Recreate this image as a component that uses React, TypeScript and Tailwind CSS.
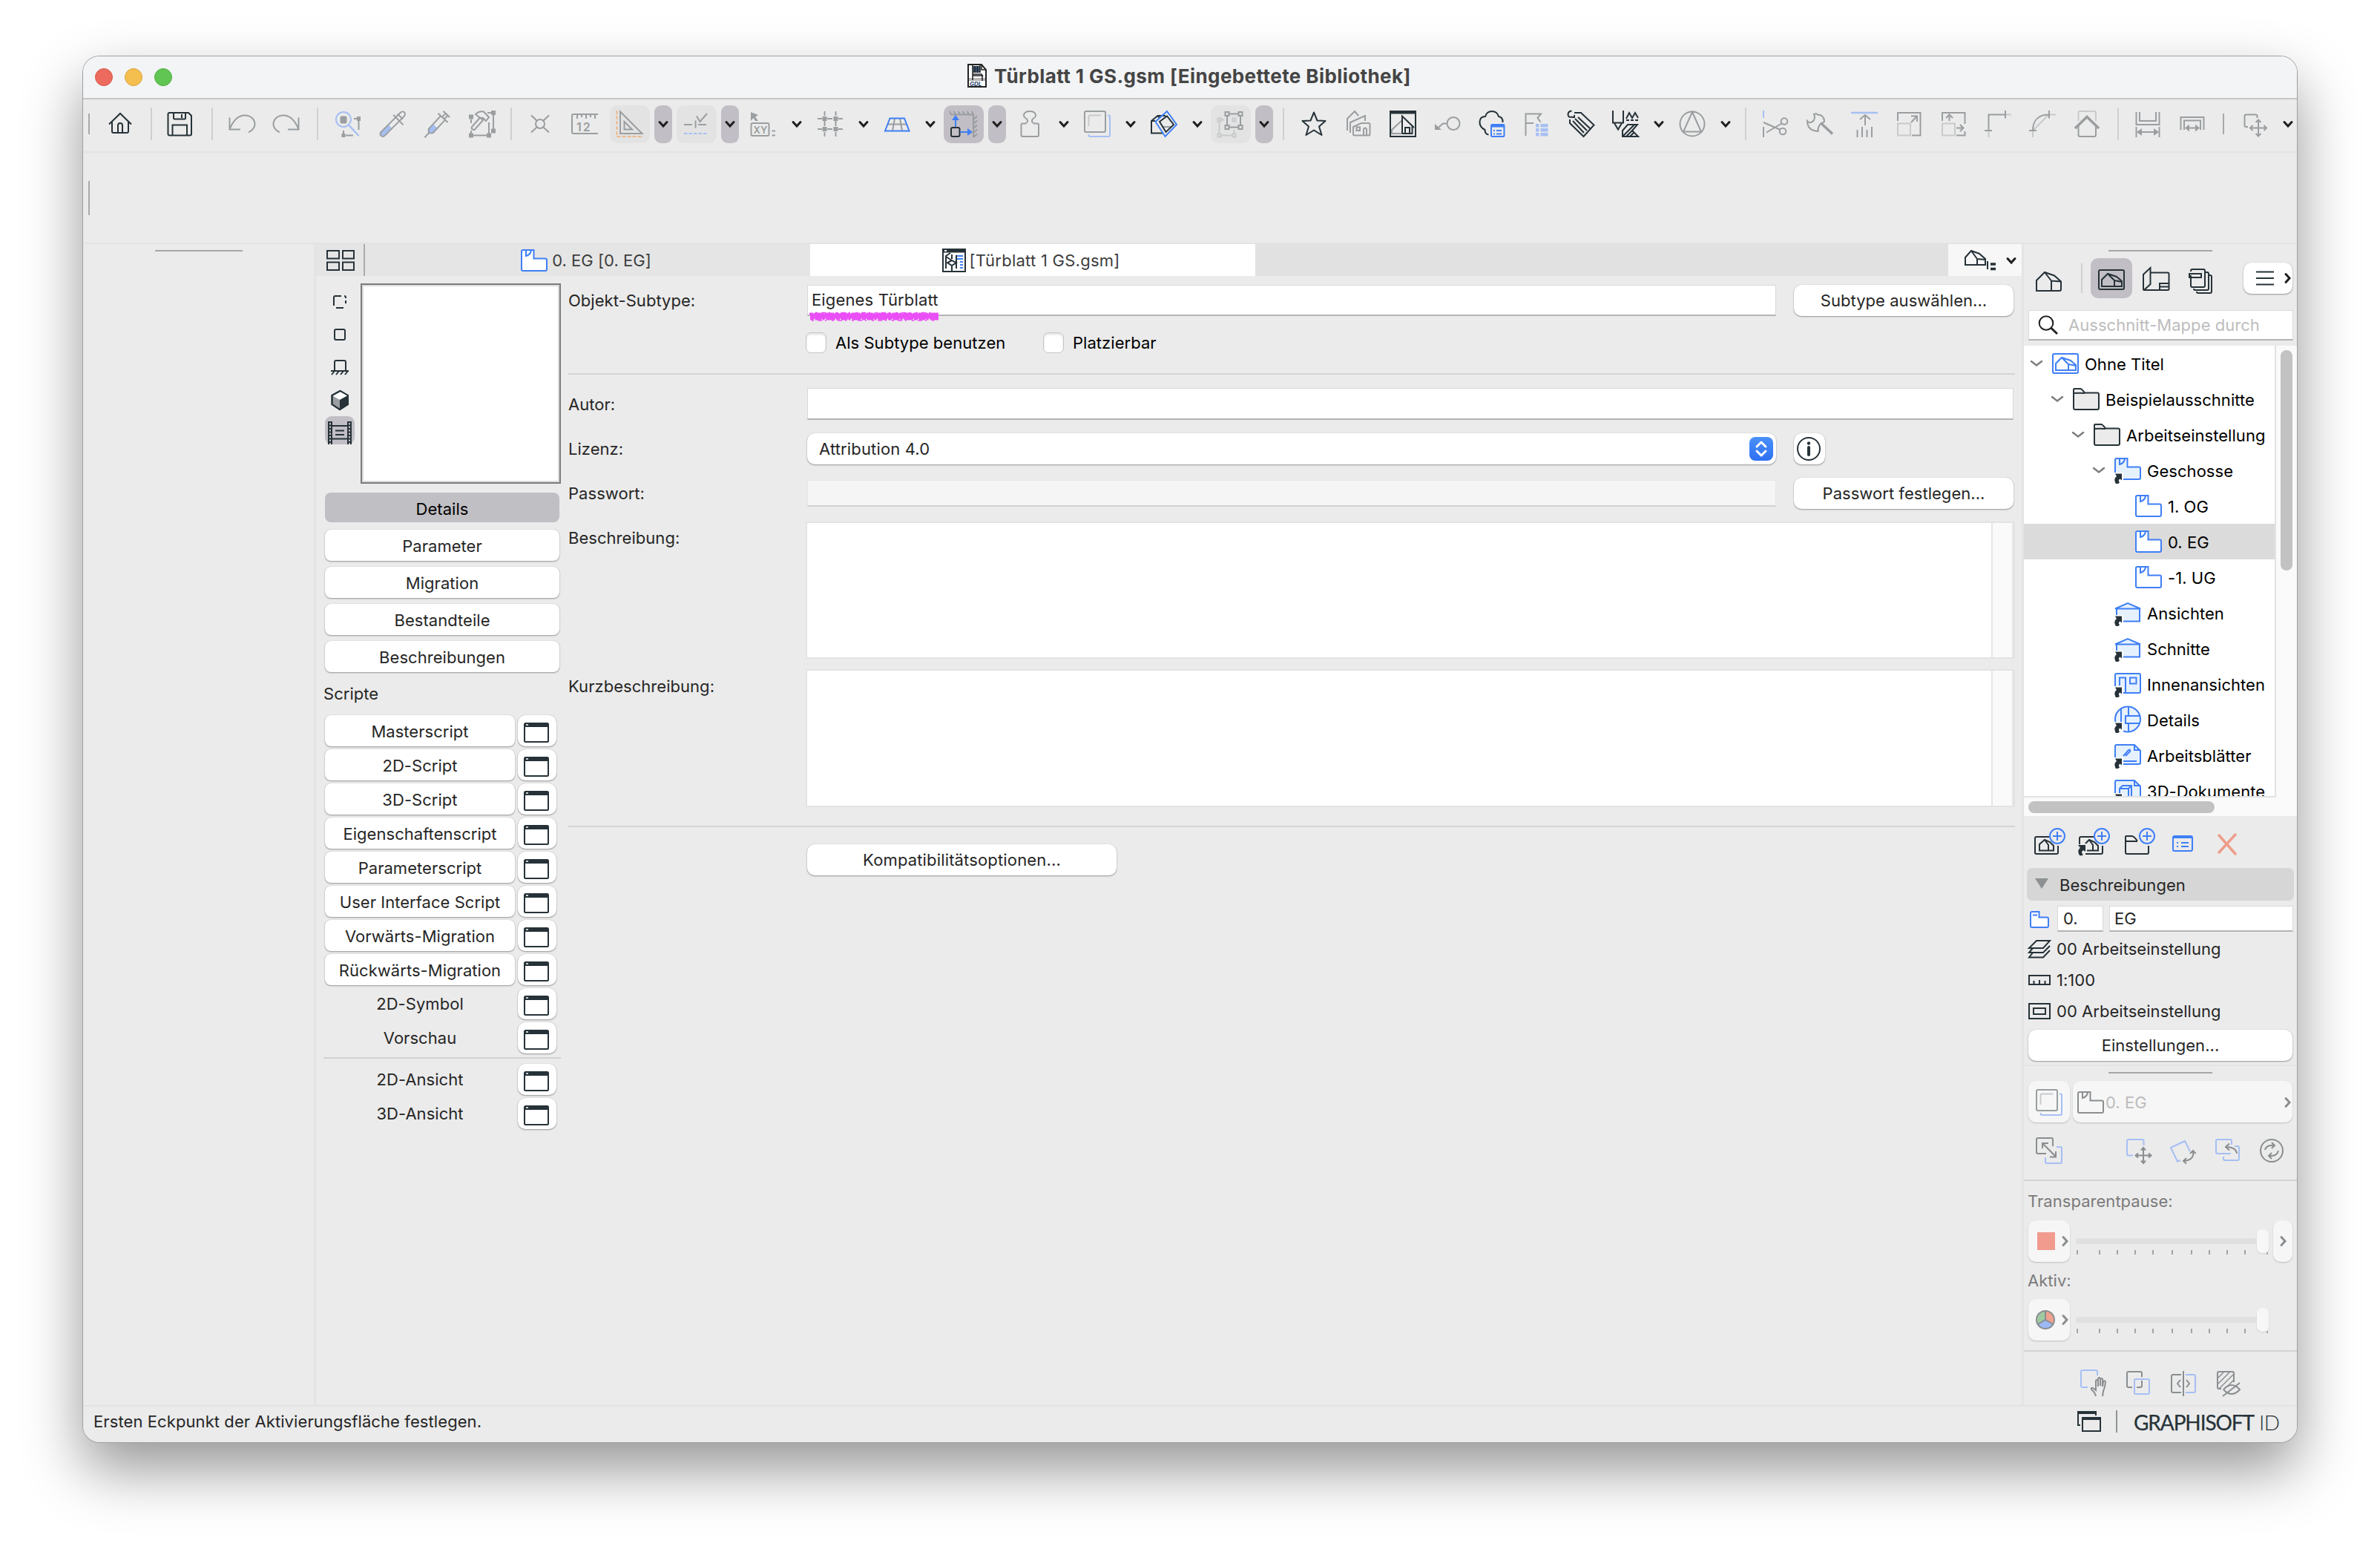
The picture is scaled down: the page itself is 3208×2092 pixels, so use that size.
import type { ReactNode } from "react";

const DARK = "#263238";
const GRAY = "#9a9ea0";
const MID = "#8a8e90";
const LIGHT = "#c8cacb";
const BLUE = "#3f7ff6";
const PALE = "#a6bff3";

type SvgProps = {
  w?: number;
  h?: number;
  c?: string;
  sw?: number;
  children: ReactNode;
};

function Svg({ w = 36, h = 36, c = GRAY, sw = 2, children }: SvgProps) {
  return (
    <svg
      width={w}
      height={h}
      viewBox={`0 0 ${w} ${h}`}
      fill="none"
      stroke={c}
      strokeWidth={sw}
      className="block shrink-0 overflow-visible"
    >
      {children}
    </svg>
  );
}

function Chevron({ c = "#1f1f1f", dir = "down" }: { c?: string; dir?: "down" | "right" }) {
  return (
    <Svg w={14} h={14} c={c} sw={3}>
      {dir === "down" ? (
        <path d="M2 4.500 7 10l5-5.500" strokeLinecap="round" />
      ) : (
        <path d="M5 1.500 10 7 5 12.500" strokeLinecap="round" />
      )}
    </Svg>
  );
}

/* ---------- toolbar icons ---------- */

const icons: Record<string, ReactNode> = {
  home: (
    <Svg c={DARK}>
      <path d="M3 18.500 18 4l15 14.500M7 15.500V28q0 2 2 2h18q2 0 2-2V15.500M15 29.500V20q0-3 3-3t3 3v9.500" />
    </Svg>
  ),
  save: (
    <Svg c={DARK}>
      <path d="M4.500 3H30l4 4v24.500q0 2-2 2H4.500q-2 0-2-2V5q0-2 2-2zM10 3v7q0 1.500 1.500 1.500h13q1.500 0 1.500-1.500V3M21 5v5M8.500 33.500V19.500H28v14" />
    </Svg>
  ),
  undo: (
    <Svg>
      <path d="M1.500 9.500V25.500H16M1.500 25.500C6 14 13 6.500 22 6.500 30 6.500 35.500 12 35.500 18.500c0 5-4 8.500-8.500 11" />
    </Svg>
  ),
  redo: (
    <Svg>
      <path d="M34.500 9.500V25.500H20M34.500 25.500C30 14 23 6.500 14 6.500 6 6.500.5 12 .5 18.500c0 5 4 8.500 8.500 11" />
    </Svg>
  ),
  findSelect: (
    <Svg>
      <circle cx="11" cy="12" r="10" stroke={PALE} />
      <path d="M18.500 20 31.500 34" stroke={PALE} strokeWidth="2.500" />
      <rect x="6.500" y="7.500" width="9" height="10" rx="2" fill={GRAY} stroke="none" />
      <path d="M25 11h4M31.500 13v13M11 27v5M14 33.500h10" />
      <rect x="29" y="8" width="5" height="6" fill={GRAY} stroke="none" />
      <rect x="8.500" y="31" width="5" height="5" fill={GRAY} stroke="none" />
    </Svg>
  ),
  dropper: (
    <Svg>
      <g transform="translate(17.500 18) rotate(45)">
        <path d="M-3.500 5h7v14a3.500 3.500 0 0 1-7 0z" fill={PALE} stroke="none" />
        <path d="M-3.500-9v28a3.500 3.500 0 0 0 7 0V-9M-8-9H11M-3.500-9v-9a3.500 4 0 0 1 7 0v9M-5-14H5" />
      </g>
    </Svg>
  ),
  syringe: (
    <Svg>
      <g transform="translate(17.500 18) rotate(43)">
        <path d="M-4 4h8v9l-4 4-4-4z" fill={PALE} stroke="none" />
        <path d="M-4-11v24l4 4 4-4v-24M-9-11H9M0 17v8M-1.500-11v-7M2.500-11v-7M-6-18H6" />
      </g>
    </Svg>
  ),
  hammerNodes: (
    <Svg>
      <path d="M3 12v5M3 27v5M6 33.500h18M27 31V16M33 5v20M25 3h5" />
      <path d="M4 22 15 9.500l4 3.500L8 25.500q-2 1-3.500-.5T4 22zM9 5q5-5 11-3.500L27 9l-4 5-4-4h-4z" />
      {[[3, 8.5], [3, 33.5], [27, 33.5], [33, 27.5], [33, 3]].map(([x, y]) => (
        <rect key={`${x}-${y}`} x={x - 3} y={y - 3} width="6" height="6" fill={GRAY} stroke="none" />
      ))}
    </Svg>
  ),
  snap: (
    <Svg>
      <circle cx="18" cy="18" r="6" />
      <path d="M6 6.500 13.500 13.500M30 6.500 22.500 13.500M6 29.500 13.500 22.500M30 29.500 22.500 22.500" />
    </Svg>
  ),
  ruler12: (
    <Svg>
      <path d="M36 5H3Q1 5 1 7V29q0 2 2 2H36M8 5v6M14 5v4M20 5v6M26 5v4M32 5v6" />
      <text x="7" y="28" fontSize="16" fontFamily="Inter, sans-serif" fontWeight="600" fill={GRAY} stroke="none" letterSpacing="2">12</text>
    </Svg>
  ),
  setSquare: (
    <Svg>
      <path d="M0.500 0V35H36" stroke="#ecb88c" strokeDasharray="5 2" />
      <path d="M5 1.500V31h29.500zM10.500 15v10.500H21z" />
    </Svg>
  ),
  guideCheck: (
    <Svg>
      <path d="M18 7.500 22.500 15 32 4M1 19h11M20 19h11M16.500 13.500v10" />
      <path d="M1 31h31" stroke={PALE} strokeDasharray="4.500 2" />
    </Svg>
  ),
  coords: (
    <Svg>
      <path d="M1 2 11 6 7 8.500 11 14H7L4.500 10 1 14z" fill={GRAY} stroke="none" />
      <rect x="1.500" y="17" width="24" height="17" rx="2" />
      <text x="4.500" y="30.500" fontSize="13" fontFamily="Inter, sans-serif" fontWeight="600" fill={GRAY} stroke="none">XY</text>
      <path d="M29.500 27.500H34M29.500 33.500H34" />
    </Svg>
  ),
  grid: (
    <Svg>
      <path d="M10.500 1v6M10.500 14v7M10.500 29v6M25.500 1v6M25.500 14v7M25.500 29v6M1 11h6M14 11h7M29 11h6M1 25h6M14 25h7M29 25h6" />
      {[[10.5, 11], [25.5, 11], [10.5, 25], [25.5, 25]].map(([x, y]) => (
        <rect key={`${x}-${y}`} x={x - 3} y={y - 3} width="6" height="6" fill={GRAY} stroke="none" />
      ))}
    </Svg>
  ),
  plane: (
    <Svg>
      <path d="M15 10.500 12 27.500M22 10.500 25 27.500M5.500 18.500H31" />
      <path d="M8.500 10.500H28L34.500 27.500H2z" stroke={BLUE} />
    </Svg>
  ),
  origin: (
    <Svg>
      <path d="M0 5.500H31V36M1 5l-2-4M7 5 4.500 1M13 5l-2.500-4M19 5l-2.500-4M25 5l-2.500-4M31 5l-2.500-4M31 12l5-4.500M31 18l5-4.500M31 24l5-4.500M31 30l5-4.500M31 36l5-4.500" />
      <rect x="1" y="23" width="11.500" height="12" rx="2" stroke={DARK} />
      <path d="M7 22V12M13 29H24" stroke={BLUE} />
      <path d="M2 13 7 6l5 7zM23 24l7 5-7 5z" fill={BLUE} stroke="none" />
    </Svg>
  ),
  gravity: (
    <Svg>
      <path d="M12 17q4-3 .5-6Q8.500 8.500 9 6q1-5 8-5t8 5q.5 2.500-3.500 5-3.500 3 .5 6M12 17.500H7q-1.500 0-1.500 1.500V33q0 2 2 2H27q2 0 2-2V19q0-1.500-1.500-1.500H22" />
    </Svg>
  ),
  trace: <TraceIcon />,
  cutPlane: (
    <Svg c={DARK}>
      <path d="M16 30.500H1V14L9.500 7H20M1 14h5M9.500 7 12 10" />
      <path d="M15 22h14" stroke={GRAY} />
      <path d="M22 7.500 31 19 20.500 29 12 15z" />
      <path d="M22 1 35 19 19.500 35 6.500 15z" stroke={BLUE} />
    </Svg>
  ),
  suspend: (
    <Svg>
      <g stroke={LIGHT}>
        <path d="M2.500 15V31M5 33.500H20M22.500 31V26M5 12.500h4" />
        <rect x="0.500" y="10.500" width="4" height="4" />
        <rect x="20.500" y="10.500" width="4" height="4" />
        <rect x="0.500" y="31.500" width="4" height="4" />
        <rect x="20.500" y="31.500" width="4" height="4" />
      </g>
      <path d="M15 4.500H28M15 22.500H28M13 7.500v12M31 7.500v12" />
      <rect x="10.500" y="2" width="5" height="5" />
      <rect x="28.500" y="2" width="5" height="5" />
      <rect x="10.500" y="20" width="5" height="5" />
      <rect x="28.500" y="20" width="5" height="5" />
    </Svg>
  ),
  star: (
    <Svg c={DARK}>
      <path d="M18 2.500 22.500 13.500 33.500 14 25 21.500 28.500 33 18 26.500 7.500 33 11 21.500 2.500 14 13.500 13.500z" strokeLinejoin="round" />
    </Svg>
  ),
  houses: (
    <Svg>
      <path d="M3 27V11L13 1l5 6M7 30V16L27 7v7M11 32V22l11-5H32q1.500 0 1.500 1.500V32q0 1.500-1.500 1.500H12.500Q11 33.500 11 32zM15.500 22.500h4.500v4.500h-4.500zM25 33.500V26q0-2.500 2-2.500t2 2.500v7.500" />
    </Svg>
  ),
  picture: (
    <Svg c={DARK}>
      <rect x="1" y="1" width="34" height="34" />
      <path d="M1 2.500H35" strokeWidth="4" />
      <path d="M17 13 3 26v5H17" stroke={GRAY} />
      <path d="M17 31V7.500L33 23M17 31H30.500V21M21 31V23h6v8" />
    </Svg>
  ),
  key: (
    <Svg>
      <circle cx="26" cy="17.500" r="8.500" />
      <path d="M17.500 17.500H12L5 23.500" />
      <path d="M1 18v8h9z" fill={GRAY} stroke="none" />
    </Svg>
  ),
  cloud: (
    <Svg c={DARK}>
      <path d="M13.500 32.500Q8.500 32 8.500 26 1 22 1.500 15 2 8 9 8 11 1 18 1t9 7q6 1 5.500 8" />
      <rect x="17" y="19" width="17.500" height="16" rx="1.500" stroke={BLUE} />
      <path d="M17 20.500H35" stroke={BLUE} strokeWidth="4" />
      <path d="M20 27h2M24 27h7M20 31.500h2M24 31.500h7" stroke={BLUE} />
    </Svg>
  ),
  flag: (
    <Svg>
      <path d="M3.500 34V4.500H24L19.500 10l4 5.500M3.500 17H14" />
      <g fill={PALE} stroke="none">
        {[18, 24, 30].map((y) => (
          <g key={y}>
            <rect x="17" y={y} width="4.500" height="4.500" />
            <rect x="23.500" y={y} width="10" height="4.500" />
          </g>
        ))}
      </g>
    </Svg>
  ),
  tag: (
    <Svg c={DARK}>
      <path d="M9 3H18L35.500 19.500 21.500 35 3 17V12M6 8.500Q1 10 .5 5.500.5 1 5.500.5M9 6v3H6M10 11 26 27M14 9 30 24M7 14 22 30" />
    </Svg>
  ),
  penSets: (
    <Svg c={DARK}>
      <path d="M1 0V16.500H15V0M3 17 8 25.500 13 17M19 11 23 3l4 7 4-7 4 7M19 13h4M25 13h4M31 13h4" />
      <path d="M14 35V27L21 19H34L27 27l8 8zM15 34 30 19M19 35l8-8M24 35l5-5" />
    </Svg>
  ),
  circleTri: (
    <Svg>
      <circle cx="18" cy="18" r="16.500" />
      <path d="M18 2 6 28.500H30z" />
    </Svg>
  ),
  scissors: (
    <Svg>
      <path d="M2 0v10" stroke={PALE} />
      <path d="M2 22v14M2 16 25 26M6 29.500 26.500 17.500" />
      <circle cx="30" cy="14.500" r="4.300" />
      <circle cx="28" cy="28" r="4.300" />
    </Svg>
  ),
  axe: (
    <Svg>
      <path d="M19 16.500 35 31.500" strokeWidth="3.500" />
      <path d="M15.500 28Q1 27 1 14q4 5 9-1Q12 8 10 5q3-1.500 5 .5Q24 6 24 15l-6 4q-3 4-2.500 9z" />
    </Svg>
  ),
  raise: (
    <Svg>
      <path d="M0 3H36" stroke={PALE} strokeWidth="2.500" />
      <path d="M19 6V20M12 12 19 6l7 6M8.500 26v10M15 22v14M21.500 26v10M28 22v14" />
    </Svg>
  ),
  scale: (
    <Svg>
      <path d="M3 17.500H20V33.500H3z" stroke={LIGHT} />
      <path d="M3 14V3H33.500V33.500H22M21 16 29 7.500M21 7.500h8V15" />
    </Svg>
  ),
  stretch: (
    <Svg>
      <path d="M3 17.500H20V33.500H3z" stroke={LIGHT} />
      <path d="M3 14V3H33.500V18M33.500 28v5.500H22M12.500 14V5.500M8 10l4.500-4.500L17 10M22 23.500H31M27 19l4.500 4.500L27 28" />
    </Svg>
  ),
  corner: (
    <Svg>
      <path d="M5.500 27v9M28 5.500h8" stroke={LIGHT} />
      <path d="M5.500 27V5.500H28M28 0v10.500M0 27H10" />
    </Svg>
  ),
  arc: (
    <Svg>
      <path d="M5 27v9M28 5.500h8M5 27 26 6" stroke={LIGHT} />
      <path d="M5 27C5 12 14 5.500 27 5.500M27 0v10.500M0 27H10" />
    </Svg>
  ),
  roof: (
    <Svg>
      <path d="M6.500 14V3q0-2 2-2H28q2 0 2 2V14" stroke={LIGHT} />
      <path d="M6.500 20V33q0 2 2 2H28q2 0 2-2V20" />
      <path d="M2 24 18 8.500 34 24" strokeWidth="3.500" />
    </Svg>
  ),
  dimOut: (
    <Svg>
      <path d="M2.500 2V19H33.500V2M7 2V14H29V2M2.500 22v14M33.500 22v14M6 29H30" />
      <path d="M3 29l7-5v10zM33 29l-7-5v10z" fill={GRAY} stroke="none" />
    </Svg>
  ),
  dimIn: (
    <Svg>
      <path d="M2.500 26V9H33.500V26M7 26V13.500H29V26M11 23.500H25" />
      <path d="M8 23.500l6-5v10zM28 23.500l-6-5v10z" fill={GRAY} stroke="none" />
    </Svg>
  ),
  move: (
    <Svg>
      <path d="M9 22H6.500q-2 0-2-2V7.500q0-2 2-2H19.500q2 0 2 2V10M23 13V34M12.500 23.500H33.500M19.500 16 23 12.500 26.500 16M19.500 31l3.500 3.500 3.500-3.500M15.500 20 12 23.500l3.500 3.500M30.500 20l3.500 3.500-3.500 3.500" />
    </Svg>
  ),
};

function TraceIcon() {
  return (
    <Svg>
      <rect x="1" y="1" width="28" height="28" rx="2" />
      <path d="M6.500 21V8.500q0-2 2-2H23" stroke={LIGHT} />
      <path d="M32 6.500h1q2 0 2 2V33q0 2-2 2H8.500q-2 0-2-2V32" stroke={PALE} />
    </Svg>
  );
}

function Sep({ className = "" }: { className?: string }) {
  return <div className={`h-11 w-0.5 shrink-0 bg-[#d0d0d0] ${className}`} />;
}

function Tool({ name }: { name: string }) {
  return <button className="flex h-[52px] w-[60px] shrink-0 items-center justify-center">{icons[name]}</button>;
}

type Split = { name: string; bg?: string; active?: boolean };

function SplitTool({ name, bg = "", active }: Split) {
  return (
    <div className="flex w-[90px] shrink-0 gap-1.5">
      <button className={`flex h-[51px] w-[54px] items-center justify-center rounded-[10px] ${bg}`}>{icons[name]}</button>
      <button className={`flex h-[51px] w-6 items-center justify-center rounded-[9px] ${active ? "bg-[#c1bfc5]" : ""}`}>
        <Chevron />
      </button>
    </div>
  );
}

const splitTools: Split[] = [
  { name: "setSquare", bg: "bg-[#e3e3e3]", active: true },
  { name: "guideCheck", bg: "bg-[#e3e3e3]", active: true },
  { name: "coords" },
  { name: "grid" },
  { name: "plane" },
  { name: "origin", bg: "bg-[#c1bfc5]", active: true },
  { name: "gravity" },
  { name: "trace" },
  { name: "cutPlane" },
  { name: "suspend", bg: "bg-[#e3e3e3]", active: true },
];

function Toolbar() {
  return (
    <div className="flex h-[72px] items-center overflow-hidden border-b-2 border-[#e3e3e3] pb-1">
      <div className="ml-[7px] h-7 w-0.5 shrink-0 bg-[#a9a9a9]" />
      <div className="w-[11px] shrink-0" />
      <Tool name="home" />
      <Sep className="mr-[7px] ml-[11px]" />
      <Tool name="save" />
      <Sep className="mr-[9px] ml-[13px]" />
      <Tool name="undo" />
      <Tool name="redo" />
      <Sep className="mx-[11px]" />
      {["findSelect", "dropper", "syringe", "hammerNodes"].map((n) => <Tool key={n} name={n} />)}
      <Sep className="mr-[8px] ml-[8px]" />
      <Tool name="snap" />
      <Tool name="ruler12" />
      <div className="w-1 shrink-0" />
      {splitTools.map((t) => <SplitTool key={t.name} {...t} />)}
      <Sep className="mr-[10px] ml-[7px]" />
      {["star", "houses", "picture", "key", "cloud", "flag", "tag", "penSets"].map((n) => <Tool key={n} name={n} />)}
      <div className="flex w-[30px] shrink-0 justify-center"><Chevron /></div>
      <Tool name="circleTri" />
      <div className="flex w-[30px] shrink-0 justify-center"><Chevron /></div>
      <Sep className="mr-[9px] ml-[11px]" />
      {["scissors", "axe", "raise", "scale", "stretch", "corner", "arc", "roof"].map((n) => <Tool key={n} name={n} />)}
      <Sep className="mr-[9px] ml-[11px]" />
      <Tool name="dimOut" />
      <Tool name="dimIn" />
      <div className="mx-[11px] h-7 w-0.5 shrink-0 bg-[#a9a9a9]" />
      <Tool name="move" />
      <div className="flex w-[30px] shrink-0 justify-center"><Chevron /></div>
    </div>
  );
}

/* ---------- shared pieces ---------- */

function StoryIcon({ c = BLUE, fill = "#ffffff" }: { c?: string; fill?: string }) {
  return (
    <Svg w={36} h={30} c={c}>
      <path d="M1 3q0-2 2-2H17.500V12.500H33q2 0 2 2V27q0 2-2 2H3q-2 0-2-2z" fill={fill} />
      <path d="M7 1.500V9q6-1.500 7-7.500" />
    </Svg>
  );
}

function HouseShape() {
  return <path d="M1 27V13L12 2 25 6.500 34 14.500V25q0 2-2 2zM12 2 21 13.500V27M21 13.500 34 14.500M1 13" />;
}

const btn = "flex items-center justify-center bg-white shadow-[0_1px_2px_rgba(0,0,0,0.35),0_0_1px_rgba(0,0,0,0.25)]";
const field = "flex items-center border border-b-2 border-[#d9d9d9] border-b-[#b4b4b4] bg-white";

/* ---------- left column ---------- */

const pages = ["Parameter", "Migration", "Bestandteile", "Beschreibungen"];

const scripts = [
  "Masterscript",
  "2D-Script",
  "3D-Script",
  "Eigenschaftenscript",
  "Parameterscript",
  "User Interface Script",
  "Vorwärts-Migration",
  "Rückwärts-Migration",
];

function WindowButton() {
  return (
    <button className={`h-[42px] w-[52px] rounded-[10px] pt-1 pr-0.5 ${btn}`}>
      <Svg w={34} h={27} c={DARK}>
        <rect x="1" y="1" width="32" height="25" rx="1.500" />
        <path d="M1 3.500H33" strokeWidth="5" />
        <path d="M3 3H6" stroke="#fff" strokeWidth="1.500" />
      </Svg>
    </button>
  );
}

function ScriptRow({ label, plain }: { label: string; plain?: boolean }) {
  return (
    <div className="flex h-[42px] gap-1">
      {plain ? (
        <div className="flex w-64 items-center justify-center">{label}</div>
      ) : (
        <button className={`w-64 rounded-lg pt-0.5 ${btn}`}>{label}</button>
      )}
      <WindowButton />
    </div>
  );
}

function ObjectColumn() {
  return (
    <div className="flex w-[330px] shrink-0 flex-col pt-2.5 pl-2.5">
      <div className="flex h-[270px] pl-0.5">
        <div className="flex w-12 flex-col pt-[3px]">
          <div className="flex h-11 w-[39px] items-center justify-center">
            <Svg w={18} h={18} c={DARK}><path d="M11 1H3Q1 1 1 3V14M4 17h10M15 1q2 0 2 2v1M17 7v4" /></Svg>
          </div>
          <div className="flex h-11 w-10 items-center justify-center">
            <Svg w={16} h={16} c={DARK}><rect x="1" y="1" width="14" height="14" rx="2" /></Svg>
          </div>
          <div className="flex h-11 w-10 items-center justify-center">
            <Svg w={24} h={21} c={DARK}><path d="M5 14V3q0-2 2-2H18q2 0 2 2V14M0 15H24M5 15 1 20M11 15 7 20M17 15l-4 5M23 15l-4 5" /></Svg>
          </div>
          <div className="flex h-11 w-10 items-center justify-center">
            <Svg w={24} h={27} c={DARK}>
              <path d="M1.500 7 12.500 1 23 7v12L12 26 1.500 19z" fill="#9a9ea0" />
              <path d="M1.500 7 12.500 1 23 7 12 13z" fill="#fff" stroke="none" />
              <path d="M12 13 23 7v12L12 26z" fill={DARK} stroke="none" />
              <path d="M1.500 7 12.500 1 23 7v12L12 26 1.500 19z" />
            </Svg>
          </div>
          <button className="flex h-[38px] w-10 items-end justify-center rounded-[9px] bg-[#c1bfc5]">
            <Svg w={32} h={31} c={DARK}>
              <path d="M1 0V31M31 0V31M5 0V31M27 0V31M5 6H27M5 23.500H27M10 12.500h12M10 18h12" />
              <path d="M3 0V31M29 0V31" strokeDasharray="2 2.500" />
            </Svg>
          </button>
        </div>
        <div className="h-[270px] w-[270px] border-2 border-[#7c7c7c] bg-white shadow-[inset_0_0_0_2px_#dcdcdc]" />
      </div>

      <div className="mt-3 ml-0.5 flex w-[316px] flex-col gap-2">
        <button className="flex h-10 items-center justify-center rounded-lg bg-[#c0bfc4] pt-1 text-black">Details</button>
        <div className="flex flex-col gap-2 pt-0.5">
          {pages.map((p) => (
            <button key={p} className={`h-[42px] rounded-lg pt-0.5 ${btn}`}>{p}</button>
          ))}
        </div>
      </div>

      <div className="flex h-[58px] items-center">Scripte</div>
      <div className="ml-0.5 flex flex-col gap-1">
        {scripts.map((s) => <ScriptRow key={s} label={s} />)}
        <ScriptRow label="2D-Symbol" plain />
        <ScriptRow label="Vorschau" plain />
      </div>
      <div className="my-[5px] h-0.5 w-80 bg-[#d2d2d2]" />
      <div className="mt-0.5 ml-0.5 flex flex-col gap-1">
        <ScriptRow label="2D-Ansicht" plain />
        <ScriptRow label="3D-Ansicht" plain />
      </div>
    </div>
  );
}

/* ---------- form ---------- */

function Checkbox({ label }: { label: string }) {
  return (
    <label className="flex items-center gap-3 text-black">
      <span className="h-7 w-7 rounded-[7px] border border-[#c6c6c6] bg-white shadow-[inset_0_2px_3px_rgba(0,0,0,0.12)]" />
      {label}
    </label>
  );
}

function Label({ children }: { children: ReactNode }) {
  return <div className="w-[322px] shrink-0">{children}</div>;
}

function TextArea({ h }: { h: string }) {
  return (
    <div className={`-ml-0.5 flex w-[1630px] border-2 border-[#e3e3e3] bg-white ${h}`}>
      <div className="flex-1" />
      <div className="w-[30px] border-r-2 border-l-2 border-[#e6e6e6] bg-[#fafafa]" />
    </div>
  );
}

function DetailsForm() {
  return (
    <div className="flex w-[1950px] flex-col pt-[11px]">
      <div className="flex h-[43px] items-center">
        <Label>Objekt-Subtype:</Label>
        <div className={`relative h-[42px] w-[1306px] pl-[5px] ${field}`}>
          <span className="tracking-[0.15px]">Eigenes Türblatt</span>
          {/* marker stroke under the value */}
          <svg className="absolute top-[35px] left-0.5" width="175" height="13" viewBox="0 0 175 13">
            <path d="M1 6H174" stroke="#ea4ff6" strokeWidth="7" />
            <path d="M0 3H175M1 10H174" stroke="#ea4ff6" strokeWidth="3" strokeDasharray="5 1.500 9 1 3 2 12 1.500" />
            <path d="M8 1.500H170M3 12H172" stroke="#ea4ff6" strokeWidth="1.500" strokeDasharray="3 5 6 4 2 7" />
          </svg>
        </div>
        <button className={`ml-6 h-[42px] w-[296px] rounded-[10px] ${btn}`}>Subtype auswählen...</button>
      </div>
      <div className="mt-[22px] flex h-7 items-center pl-[320px]">
        <div className="w-80"><Checkbox label="Als Subtype benutzen" /></div>
        <Checkbox label="Platzierbar" />
      </div>
      <div className="mt-[27px] h-0.5 bg-[#d4d4d4]" />

      <div className="mt-[18px] flex h-[43px] items-center">
        <Label>Autor:</Label>
        <div className={`h-[43px] w-[1626px] ${field}`} />
      </div>
      <div className="mt-[18px] flex h-[42px] items-center">
        <Label>Lizenz:</Label>
        <div className="flex h-[42px] w-[1306px] items-center justify-between rounded-[10px] bg-white pr-1 pl-4 shadow-[0_1px_2px_rgba(0,0,0,0.35),0_0_1px_rgba(0,0,0,0.25)]">
          <span className="tracking-[0.15px]">Attribution 4.0</span>
          <span className="flex h-8 w-8 items-center justify-center rounded-[8px] bg-linear-to-b from-[#4a90f8] to-[#2f6ff2]">
            <Svg w={16} h={24} c="#fff" sw={3}>
              <path d="M2 9 8 3l6 6M2 15l6 6 6-6" strokeLinecap="round" strokeLinejoin="round" />
            </Svg>
          </span>
        </div>
        <button className={`ml-6 h-[42px] w-[42px] rounded-[10px] ${btn}`}>
          <Svg w={32} h={32} c={DARK}>
            <circle cx="15" cy="16" r="15" />
            <circle cx="15" cy="8.500" r="2.200" fill={DARK} stroke="none" />
            <path d="M15 14v10" strokeWidth="4" strokeLinecap="round" />
          </Svg>
        </button>
      </div>
      <div className="mt-[18px] flex h-[42px] items-center">
        <Label>Passwort:</Label>
        <div className="h-9 w-[1306px] border border-b-2 border-[#e6e6e6] border-b-[#d2d2d2] bg-[#f5f5f5]" />
        <button className={`ml-6 h-[42px] w-[296px] rounded-[10px] ${btn}`}>Passwort festlegen...</button>
      </div>
      <div className="mt-[17px] flex">
        <Label><div className="flex h-11 items-center">Beschreibung:</div></Label>
        <TextArea h="h-[185px]" />
      </div>
      <div className="mt-[14px] flex">
        <Label><div className="flex h-[46px] items-center">Kurzbeschreibung:</div></Label>
        <TextArea h="h-[186px]" />
      </div>
      <div className="mt-[25px] h-0.5 bg-[#d4d4d4]" />
      <button className={`mt-[23px] ml-[322px] h-[42px] w-[417px] rounded-[10px] tracking-[0.15px] ${btn}`}>Kompatibilitätsoptionen...</button>
    </div>
  );
}

function TabBar() {
  return (
    <div className="flex h-[43px] bg-[#e5e5e5] text-[#3d3d3d]">
      <div className="flex w-[66px] items-center border-r-2 border-[#ababab] pl-3.5">
        <Svg w={38} h={28} c={DARK}>
          <path d="M1 1H17V11.500H1zM22 1H37V11.500H22zM1 16.500H17V27H1zM22 16.500H37V27H22z" />
        </Svg>
      </div>
      <div className="flex w-[600px] items-center justify-center gap-1.5 pr-1">
        <StoryIcon />
        0. EG [0. EG]
      </div>
      <div className="flex w-[600px] items-center justify-center gap-1 bg-white pr-1">
        <Svg w={32} h={32} c={DARK}>
          <rect x="1" y="1" width="30" height="30" fill="#fff" />
          <path d="M1 3H31" strokeWidth="5" />
          <path d="M3 3h3" stroke="#fff" />
          <path d="M5 27V10L11 6M5 11l8 5M13 16 7 19l6 4 6-4zM19 9v18M13 8v6M13 24v7" />
          <path d="M20 10h8M20 14h8M24 18h4M24 22h4M24 26h4" stroke={BLUE} />
        </Svg>
        <span className="tracking-[0.25px]">[Türblatt 1 GS.gsm]</span>
      </div>
      <div className="flex-1 bg-[#e1e1e1]" />
      <div className="flex w-[99px] items-center justify-end gap-3.5 bg-[#f7f7f7] pr-[7px]">
        <Svg w={42} h={27} c={DARK}>
          <path d="M1 20V10L9 1 20 5l8 7v8H1zM9 1l8 11v8M17 12l11 1" />
          <path d="M31 15v11" />
          <path d="M35 19h7M35 25.500h7" strokeWidth="3.500" />
        </Svg>
        <Chevron />
      </div>
    </div>
  );
}

/* ---------- navigator ---------- */

const ALIAS = (
  <g stroke="none">
    <path d="M-1 21H12V37H-1z" fill="#fff" />
    <path d="M1.500 35.500Q-1.500 29 3 26L1 22.500h9v9L7.500 29.500q-3 1.500-.5 5-2.500 2.500-5.500 1z" fill={DARK} />
  </g>
);

const treeIcons: Record<string, ReactNode> = {
  project: (
    <Svg h={30} c={BLUE}>
      <rect x="1" y="2" width="34" height="26" rx="2" />
      <path d="M5 24V15l8-8 12 4 7 6v7zM13 7l9 9v8M22 16l10 2" />
    </Svg>
  ),
  folder: (
    <Svg h={30} c={DARK}>
      <path d="M1 7V2q0-1 1-1H10q2 0 6 5.500H33q2 0 2 2V27q0 2-2 2H3q-2 0-2-2V7q7-.5 15 0" fill="#ebebeb" />
    </Svg>
  ),
  story: <StoryIcon />,
  stories: (
    <Svg c={BLUE}>
      <path d="M1 4q0-2 2-2H17.500V13.500H33q2 0 2 2V28q0 2-2 2H3q-2 0-2-2z" fill="#e6f1fe" />
      <path d="M7 2.500V10q6-1.500 7-7.500" />
      {ALIAS}
    </Svg>
  ),
  elevation: (
    <Svg c={BLUE}>
      <path d="M3 12.500V29.500H34V12.500" fill="#e6f1fe" />
      <path d="M1 12.500 18 5l17 7.500z" fill="#e6f1fe" />
      {ALIAS}
    </Svg>
  ),
  interior: (
    <Svg c={BLUE}>
      <rect x="1" y="4" width="34" height="26" rx="2" fill="#e6f1fe" />
      <path d="M7 20V9.500H15V30M21 9.500h8.500v8H21z" />
      {ALIAS}
    </Svg>
  ),
  detail: (
    <Svg c={BLUE}>
      <circle cx="18" cy="17.500" r="17" fill="#e6f1fe" />
      <path d="M9 3V21M19 1V13M19 23V34M35 13H15V23H34" />
      {ALIAS}
    </Svg>
  ),
  sheet: (
    <Svg c={BLUE}>
      <path d="M3 4H27l8 8V28q0 2-2 2H3q-2 0-2-2V6q0-2 2-2z" fill="#e6f1fe" />
      <path d="M27 4v7h8M12 19 19 11q3-1 2 2l-6 6M12 26H30" />
      {ALIAS}
    </Svg>
  ),
  doc3d: (
    <Svg c={BLUE}>
      <path d="M3 4H27l8 8V28q0 2-2 2H3q-2 0-2-2V6q0-2 2-2z" fill="#e6f1fe" />
      <path d="M27 4v7h8M7 30V15l4-4H23V26M7 15H19V30M19 15l4-4" />
      {ALIAS}
    </Svg>
  ),
};

const tree = [
  { label: "Ohne Titel", icon: "project", pad: "pl-[9px]", open: true },
  { label: "Beispielausschnitte", icon: "folder", pad: "pl-[37px]", open: true },
  { label: "Arbeitseinstellung", icon: "folder", pad: "pl-[65px]", open: true },
  { label: "Geschosse", icon: "stories", pad: "pl-[93px]", open: true },
  { label: "1. OG", icon: "story", pad: "pl-[150px]" },
  { label: "0. EG", icon: "story", pad: "pl-[150px]", selected: true },
  { label: "-1. UG", icon: "story", pad: "pl-[150px]" },
  { label: "Ansichten", icon: "elevation", pad: "pl-[122px]" },
  { label: "Schnitte", icon: "elevation", pad: "pl-[122px]" },
  { label: "Innenansichten", icon: "interior", pad: "pl-[122px]" },
  { label: "Details", icon: "detail", pad: "pl-[122px]" },
  { label: "Arbeitsblätter", icon: "sheet", pad: "pl-[122px]" },
  { label: "3D-Dokumente", icon: "doc3d", pad: "pl-[122px]" },
];

function Tree() {
  return (
    <div className="flex h-[634px] bg-[#fafafa]">
      <div className="flex w-[340px] flex-col">
        <div className="h-[609px] overflow-hidden border-r-2 border-b-2 border-[#e3e3e3] bg-white text-black">
          {tree.map((n) => (
            <div key={n.label} className={`flex h-12 items-center whitespace-nowrap ${n.pad} ${n.selected ? "bg-[#dbdbdb]" : ""}`}>
              {n.open && (
                <div className="mr-[13px]">
                  <Svg w={16} h={10} c="#7d7d7d" sw={2.5}><path d="M1 2 8 7.500 15 2" strokeLinecap="round" /></Svg>
                </div>
              )}
              {treeIcons[n.icon]}
              <span className="ml-2 pt-0.5">{n.label}</span>
            </div>
          ))}
        </div>
        <div className="mt-[5px] ml-1.5 h-4 w-[251px] rounded-full bg-[#c2c2c2]" />
      </div>
      <div className="mt-1.5 ml-1.5 h-[297px] w-4 rounded-full bg-[#c2c2c2]" />
    </div>
  );
}

function PlusBadge() {
  return (
    <g stroke={BLUE}>
      <circle cx="31" cy="11" r="10" fill="#ebebeb" />
      <path d="M31 5v12M25 11H37" />
    </g>
  );
}

const ticks = [0, 30, 54, 78, 102, 128, 154, 178, 202, 226, 256];

function Slider() {
  return (
    <svg width="262" height="56" viewBox="0 0 262 56" className="block shrink-0">
      <rect x="0" y="24" width="258" height="8" rx="4" fill="#e0e0e0" />
      {ticks.map((t) => (
        <rect key={t} x={t + 1} y="40" width="2" height="6" fill="#a3a3a3" />
      ))}
      <rect x="243.500" y="12.500" width="17" height="33" rx="7.500" fill="#dadada" />
      <rect x="244" y="12" width="16" height="32" rx="7" fill="#f7f7f7" />
    </svg>
  );
}

const softBtn = "flex items-center rounded-[10px] bg-[#f6f6f6] shadow-[0_1px_2px_rgba(0,0,0,0.2)]";

function Grip() {
  return <div className="mx-auto h-0.5 w-[140px] bg-[#a7a7a7]" />;
}

function Navigator() {
  return (
    <div className="flex w-[368px] shrink-0 flex-col">
      <div className="h-[137px]">
        <div className="pt-2"><Grip /></div>
        <div className="mt-[9px] flex h-[54px] items-center pl-4">
          <div className="pt-2">
            <Svg w={36} h={28} c={DARK}><HouseShape /></Svg>
          </div>
          <div className="mr-[11px] ml-[25px] h-10 w-0.5 bg-[#d0d0d0]" />
          <button className="flex h-[54px] w-14 items-center justify-center rounded-[10px] bg-[#c1bfc5] pt-1">
            <Svg w={36} h={28} c={DARK}>
              <rect x="1" y="1" width="34" height="26" rx="2" />
              <path d="M5 23V14l8-8 12 4 7 6v7zM13 6l9 9v8M22 15l10 2" />
            </Svg>
          </button>
          <div className="ml-3.5 pt-0.5">
            <Svg w={36} h={32} c={DARK}>
              <path d="M10.500 7V23L2 31M10.500 7V1L1 10V30q0 1 1 1H34q1.500 0 1.500-1.500V9Q35.500 7.500 34 7.500H10.500M35 22H23V31M23 26.500H35" />
            </Svg>
          </div>
          <div className="ml-[26px] pt-2">
            <Svg w={32} h={34} c={DARK}>
              <path d="M3 4V3q0-2 2-2H20q2 0 2 2V23q0 2-2 2H5q-2 0-2-2V9M1 7H17v5H1zM7 27q0 2 2 2H25q2 0 2-2V7q0-2-2-2H22M11 31q0 2 2 2H29q2 0 2-2V11q0-2-2-2H27" />
            </Svg>
          </div>
          <button className={`ml-[42px] h-[42px] w-[66px] gap-[11px] rounded-[10px] pl-4 ${btn}`}>
            <Svg w={24} h={20} c={DARK}><path d="M0 1.500H24M0 10H24M0 18.500H24" /></Svg>
            <Chevron dir="right" />
          </button>
        </div>
        <div className={`mt-4 ml-1.5 h-[41px] w-[357px] pl-[13px] ${field} text-[#bdbdbd]`}>
          <Svg w={26} h={26} c="#1f1f1f">
            <circle cx="10" cy="10.500" r="9.300" />
            <path d="M16.500 17 25 25" strokeWidth="3" />
          </Svg>
          <span className="ml-[14px] whitespace-nowrap">Ausschnitt-Mappe durch</span>
        </div>
      </div>

      <Tree />

      <div className="flex h-[70px] pt-4 pl-3.5">
        <div className="w-[58px]">
          <Svg w={42} h={36} c={DARK}>
            <path d="M20 12H3q-2 0-2 2V33q0 2 2 2H30q2 0 2-2V24M7 30.500V22l7-6 7 3 5 5v6.500zM14 16l5 7v7.500" />
            <PlusBadge />
          </Svg>
        </div>
        <div className="w-16">
          <Svg w={44} h={38} c={DARK}>
            <path d="M22 12H5q-2 0-2 2v8M11 35H32q2 0 2-2V24M13 30.500H28V24l-5-5-7-3-5 5M16 16l5 7v7.500" />
            <path d="M3 37Q-1 30 4 27L1 23h10v9l-3-2q-4 3 0 6-2 2-5 1z" fill={DARK} stroke="none" />
            <g transform="translate(2 0)"><PlusBadge /></g>
          </Svg>
        </div>
        <div className="w-[50px]">
          <Svg w={42} h={36} c={DARK}>
            <path d="M17 18H3q-2 0-2-2M32 24V33q0 2-2 2H3q-2 0-2-2V12q0-1 1-1H10q2 0 7 6.500" />
            <g transform="translate(-1 0)"><PlusBadge /></g>
          </Svg>
        </div>
        <div className="ml-3.5 pt-2.5">
          <Svg w={28} h={22} c={BLUE}>
            <rect x="1" y="1" width="26" height="20" rx="2" />
            <path d="M1 2.500H27" strokeWidth="3" />
            <path d="M6 10h2M12 10h10M6 15h2M12 15h10" />
          </Svg>
        </div>
        <div className="ml-[33px] pt-2">
          <Svg w={26} h={28} c="#ee9d8b" sw={3.5}><path d="M2 2 24 27M24 1 2 25" strokeLinecap="round" /></Svg>
        </div>
      </div>

      <div className="ml-1 flex h-11 w-[360px] items-center rounded-[7px] bg-[#d6d6d6] pb-0.5 pl-[11px]">
        <svg width="18" height="14" viewBox="0 0 18 14"><path d="M0 0H18L9 14z" fill="#8d9193" /></svg>
        <span className="ml-[15px] pt-1">Beschreibungen</span>
      </div>
      <div className="mt-[7px] flex h-[35px] items-center pl-2">
        <Svg w={26} h={24} c={BLUE}>
          <path d="M1 4q0-2 2-2H12.500V9.500H23q2 0 2 2V21q0 2-2 2H3q-2 0-2-2z" fill="#fff" />
          <path d="M4 6.500h6" />
        </Svg>
        <div className={`ml-[11px] h-[35px] w-[62px] pl-[7px] ${field}`}>0.</div>
        <div className={`ml-2 h-[35px] w-[248px] pl-1.5 ${field}`}>EG</div>
      </div>
      <div className="mt-0.5 flex h-[42px] items-center gap-2 pl-1.5">
        <Svg w={30} h={25} c={DARK}>
          <path d="M11 1H29L20 11H1zM6 11 1 17H20L29 8M6 17 1 23.500H20L29 14" />
        </Svg>
        00 Arbeitseinstellung
      </div>
      <div className="flex h-[42px] items-center gap-2 pl-1.5">
        <Svg w={30} h={14} c={DARK}><path d="M1 1H29V13H1zM7.500 13V8M15 13V7M22.500 13V8" /></Svg>
        1:100
      </div>
      <div className="flex h-[42px] items-center gap-2 pl-1.5">
        <Svg w={30} h={22} c={DARK}><path d="M1 1H29V21H1zM7 7H23V15H7z" /></Svg>
        00 Arbeitseinstellung
      </div>
      <button className={`mt-1 ml-1.5 h-[42px] w-[356px] rounded-[10px] ${btn}`}>Einstellungen...</button>
      <div className="mt-[5px] h-0.5 bg-[#e3e3e3]" />
      <div className="mt-2"><Grip /></div>

      <div className="mt-[10px] flex gap-1 pl-1.5">
        <button className={`h-14 w-14 justify-center pt-0.5 ${softBtn}`}>
          <TraceIcon />
        </button>
        <div className={`h-14 w-[296px] pt-0.5 pl-1.5 text-[#bcbcbc] ${softBtn}`}>
          <StoryIcon c={MID} fill="none" />
          <span className="ml-0.5 flex-1">0. EG</span>
          <Chevron c={MID} dir="right" />
        </div>
      </div>

      <div className="mt-5 flex h-[57px] pl-4">
        <div className="w-[122px]">
          <Svg c={MID}>
            <path d="M28 13h5q2 0 2 2V33q0 2-2 2H15q-2 0-2-2V27" stroke={PALE} />
            <path d="M14 22H3q-2 0-2-2V3Q1 1 3 1H21q2 0 2 2v9M9 8 27 26M9 15V8h8M27 19v7.500H19" />
          </Svg>
        </div>
        <div className="w-[59px] pt-0.5">
          <Svg w={34} h={34} c={MID}>
            <path d="M9 22.500H3q-2 0-2-2V3Q1 1 3 1H21.500q2 0 2 2V9" stroke={PALE} />
            <path d="M23 13V32M13 22.500H33M20 15.500 23 12l3 3.500M20 29.500l3 3.500 3-3.500M16 19.500l-3.500 3 3.500 3M30 19.500l3.500 3-3.500 3" />
          </Svg>
        </div>
        <div className="w-[61px] pt-0.5">
          <Svg w={34} h={34} c={MID}>
            <path d="M14 29 10 30.500 1 12 20 3l7 14" stroke={PALE} strokeLinejoin="round" />
            <path d="M31 17Q33 29 18 30M27 20l4-4 3.500 4M22 26l-4 4 4 3.500" />
          </Svg>
        </div>
        <div className="w-[60px] pt-0.5">
          <Svg w={34} h={34} c={MID}>
            <path d="M22 8V3q0-2-2-2H3Q1 1 1 3V18q0 2 2 2H21M26 10h4q2 0 2 2V27q0 2-2 2H13q-2 0-2-2V24" stroke={PALE} />
            <path d="M29 20Q28 11 14 11M19 6.500 14 11l5 4.500" />
          </Svg>
        </div>
        <div className="pt-0.5">
          <Svg w={32} h={32} c={MID}>
            <circle cx="16" cy="16" r="15" />
            <path d="M7 15Q9 8 19 9M16 5l4 4-4 4M25 16q-2 8-12 7M16 19l-4 4 4 4" />
          </Svg>
        </div>
      </div>
      <div className="h-0.5 bg-[#d3d3d3]" />

      <div className="flex h-[54px] items-center pl-[5px] text-[#7b7b7b]">Transparentpause:</div>
      <div className="-mt-px flex h-14 pl-1.5">
        <button className={`h-14 w-14 pl-3 ${softBtn}`}>
          <span className="mr-1.5 h-6 w-6 bg-[#f19b8f]" />
          <Chevron c={MID} dir="right" />
        </button>
        <div className="ml-2"><Slider /></div>
        <button className={`ml-1 h-14 w-[26px] justify-center ${softBtn}`}>
          <Chevron c={MID} dir="right" />
        </button>
      </div>
      <div className="flex h-[50px] items-center pl-[5px] text-[#7b7b7b]">Aktiv:</div>
      <div className="flex h-14 pl-1.5">
        <button className={`h-14 w-14 pl-2.5 ${softBtn}`}>
          <span className="mr-1.5">
            <Svg w={26} h={26} c={MID}>
              <path d="M13 13V1A12 12 0 0 1 23.400 19z" fill="#f1a18f" stroke="none" />
              <path d="M13 13V1A12 12 0 0 0 2.600 19z" fill="#9fcba2" stroke="none" />
              <path d="M13 13 2.600 19A12 12 0 0 0 23.400 19z" fill="#9cb9f6" stroke="none" />
              <path d="M13 13V1M13 13 2.600 19M13 13l10.400 6" />
              <circle cx="13" cy="13" r="12" />
            </Svg>
          </span>
          <Chevron c={MID} dir="right" />
        </button>
        <div className="ml-2"><Slider /></div>
      </div>
      <div className="mt-[13px] h-0.5 bg-[#d3d3d3]" />

      <div className="flex pt-6 pl-[76px]">
        <div className="w-[62px]">
          <Svg c={MID}>
            <path d="M10 24H3q-2 0-2-2V3Q1 1 3 1H21q2 0 2 2V8" stroke={PALE} />
            <path d="M21 36Q20 31 15 27q-1-3 2-2l4 3V15q1-2 3 0v8-11q1.500-2 3 0V22V13q1.500-2 3 0V23l1-7q2-2 3 1-1 8-3 12l-1 7" />
          </Svg>
        </div>
        <div className="w-[60px] pt-0.5">
          <Svg w={32} h={34} c={MID}>
            <path d="M8 22H3q-2 0-2-2V3Q1 1 3 1H19q2 0 2 2V8M21 13v7q0 2-2 2H14" />
            <rect x="11" y="11" width="20" height="20" rx="1.500" stroke={PALE} />
          </Svg>
        </div>
        <div className="w-[62px] pt-0.5">
          <Svg w={34} h={34} c={MID}>
            <path d="M20 5H31q2 0 2 2V27q0 2-2 2H20" stroke={PALE} />
            <path d="M14 5H3Q1 5 1 7V27q0 2 2 2H14M17 0V34M13 12l-4 5 4 5M21 12l4 5-4 5" />
          </Svg>
        </div>
        <div className="pt-0.5">
          <Svg w={32} h={34} c={MID}>
            <path d="M6 24H3q-2 0-2-2V3Q1 1 3 1H21q2 0 2 2V15" />
            <path d="M2 9 9 2M2 17 17 2M3 24 23 4M15 20l8-8" strokeWidth="1.500" />
            <path d="M9 25Q20 13 31 25 20 37 9 25M8 34 31 16" />
          </Svg>
        </div>
      </div>
    </div>
  );
}

function TitleBar() {
  return (
    <div className="flex h-[58px] items-center border-b-2 border-[#c6c6c6] bg-[#f3f4f6]">
      <div className="flex w-[1192px] gap-4 pl-4">
        <span className="h-6 w-6 rounded-full border border-[#d8594c] bg-[#ec6a5e]" />
        <span className="h-6 w-6 rounded-full border border-[#d9a33c] bg-[#f4bf4f]" />
        <span className="h-6 w-6 rounded-full border border-[#4fae40] bg-[#61c554]" />
      </div>
      <div className="pb-1">
        <Svg w={26} h={32} c="#222">
          <path d="M1 1H19l6 7V31H1z" fill="#fff" />
          <path d="M19 1v7h6" strokeWidth="1.500" />
          <rect x="2" y="19" width="22" height="4" fill="#b5b5b5" stroke="none" />
          <rect x="7" y="3" width="10" height="9" fill="#3b5674" stroke="none" />
          <path d="M7 2V22M17 2V12M7 14H19l2 3M7 16H20V23M10 3V12M13.500 3V12" strokeWidth="1.500" />
          <text x="3" y="30" fontSize="8" fontWeight="700" fontStyle="italic" fontFamily="Inter, sans-serif" fill="#27446b" stroke="none">GDL</text>
        </Svg>
      </div>
      <h1 className="ml-[10px] pb-0.5 text-[26px] font-bold tracking-[0.42px] whitespace-nowrap text-[#454545]">
        Türblatt 1 GS.gsm [Eingebettete Bibliothek]
      </h1>
    </div>
  );
}

function StatusBar() {
  return (
    <div className="flex h-[50px] items-center border-t-2 border-[#e3e3e3] pb-2 pl-3.5">
      <span className="flex-1 tracking-[0.09px]">Ersten Eckpunkt der Aktivierungsfläche festlegen.</span>
      <Svg w={32} h={28} c={DARK}>
        <path d="M4 19H1V2H25V6" />
        <path d="M0 2H26" strokeWidth="4" />
        <rect x="7" y="9" width="24" height="18" />
        <path d="M6 10H32" strokeWidth="4" />
      </Svg>
      <div className="ml-5 h-[30px] w-0.5 bg-[#8f9496]" />
      <div className="ml-[22px] w-[220px] pt-0.5 text-[28px] leading-none whitespace-nowrap text-[#263238] [font-family:Lato,sans-serif]">
        <span className="tracking-[-1.1px] [-webkit-text-stroke:0.25px_#263238]">GRAPHISOFT</span>
        <span className="ml-[7px] font-light tracking-[-0.5px]">ID</span>
      </div>
    </div>
  );
}

export default function App() {
  return (
    <div className="h-[2092px] w-[3208px] overflow-hidden bg-white pt-[76px] pl-[112px] text-[22px] leading-none tracking-[0.04px] text-[#262626] [font-family:Inter,sans-serif]">
      <div className="h-[1868px] w-[2984px] rounded-[22px] shadow-[0_0_0_1px_#9f9f9f,0_36px_80px_rgba(0,0,0,0.42)]">
        <div className="flex h-[1868px] w-[2984px] flex-col overflow-hidden rounded-[22px] bg-[#ebebeb]">
          <TitleBar />
          <Toolbar />
          <div className="flex h-[123px] items-center border-b-2 border-[#e3e3e3]">
            <div className="ml-[7px] h-[46px] w-0.5 bg-[#a9a9a9]" />
          </div>
          <div className="flex flex-1">
            <div className="w-[314px] shrink-0 border-r-[3px] border-[#e4e4e4] pt-2 pl-[97px]">
              <div className="h-0.5 w-[118px] bg-[#a7a7a7]" />
            </div>
            <div className="flex w-[2302px] shrink-0 flex-col border-r-[3px] border-[#e4e4e4]">
              <TabBar />
              <div className="flex">
                <ObjectColumn />
                <div className="pl-2.5"><DetailsForm /></div>
              </div>
            </div>
            <Navigator />
          </div>
          <StatusBar />
        </div>
      </div>
    </div>
  );
}
